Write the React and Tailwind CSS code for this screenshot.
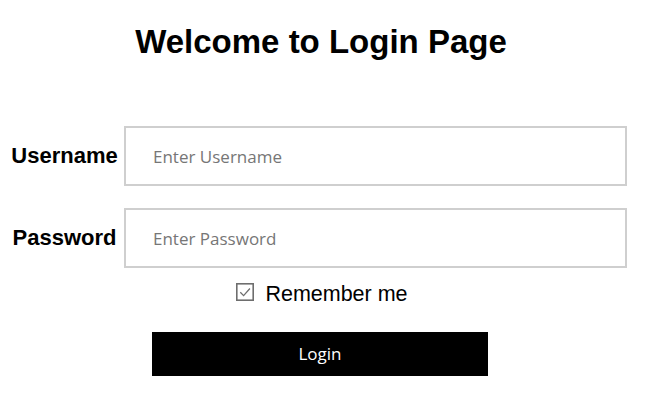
import React, { useState } from 'react';

const UI_FONT = { fontFamily: '"Open Sans", "Noto Sans", sans-serif' };

function Field({ label, placeholder, type = 'text', value, onChange }) {
  return (
    <div className="flex items-center">
      <label className="w-[124px] shrink-0 pl-[5px] text-center text-[22px] font-bold leading-none text-black">
        {label}
      </label>
      <input
        type={type}
        value={value}
        onChange={e => onChange(e.target.value)}
        placeholder={placeholder}
        style={UI_FONT}
        className="w-[503px] h-[60px] border-2 border-[#cfcfcf] bg-white pl-[27px] text-[17px] text-[#333] placeholder:text-[#767676] focus:outline-none"
      />
    </div>
  );
}

export default function App() {
  const [username, setUsername] = useState('');
  const [password, setPassword] = useState('');
  const [remember, setRemember] = useState(true);

  return (
    <div className="min-h-screen w-[648px] bg-white" style={{ fontFamily: '"Liberation Sans", Arial, sans-serif' }}>
      <h1 className="pt-[25px] pr-[6px] text-center text-[33px] font-bold leading-none text-black">
        Welcome to Login Page
      </h1>

      <form onSubmit={e => e.preventDefault()} className="mt-[68px] flex flex-col">
        <Field label="Username" placeholder="Enter Username" value={username} onChange={setUsername} />
        <div className="mt-[22px]">
          <Field label="Password" placeholder="Enter Password" type="password" value={password} onChange={setPassword} />
        </div>

        {/* Remember me */}
        <div className="mt-[15px] h-[22px] flex justify-center pr-[4px]">
          <label className="flex items-start gap-[11px] cursor-pointer" onClick={() => setRemember(r => !r)}>
            <svg width="18" height="18" viewBox="0 0 18 18" className="shrink-0">
              <rect x="0.8" y="0.8" width="16.4" height="16.4" fill="white" stroke="#6e6e6e" strokeWidth="1.6" />
              {remember && (
                <path d="M4.3 9.3 L7.6 12.6 L13.9 5.5" fill="none" stroke="#6e6e6e" strokeWidth="1.3" />
              )}
            </svg>
            <span className="mt-[0.5px] text-[21.5px] leading-none text-black">Remember me</span>
          </label>
        </div>

        {/* Button */}
        <div className="mt-[27px] flex justify-center pr-[8px]">
          <button
            type="submit"
            style={UI_FONT}
            className="w-[336px] h-[44px] bg-black text-white text-[17px]"
          >
            Login
          </button>
        </div>
      </form>
    </div>
  );
}
